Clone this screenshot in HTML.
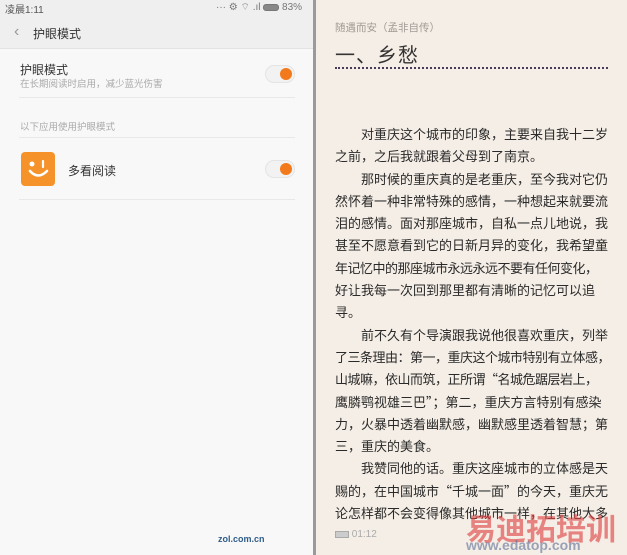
<!DOCTYPE html>
<html><head><meta charset="utf-8"><style>
*{margin:0;padding:0;box-sizing:border-box}
html,body{width:627px;height:555px;overflow:hidden}
body{background:#9a9a9a;font-family:"Liberation Sans","Noto Sans CJK SC",sans-serif;position:relative}
.l{position:absolute;left:0;top:0;width:313px;height:555px;background:#f8f8f8}
.r{position:absolute;left:316px;top:0;width:311px;height:555px;background:#f5eee6;overflow:hidden}
.t{position:absolute;white-space:nowrap}
.tog{position:absolute;width:30px;height:18px;border-radius:9px;background:#f2f2f2;border:1px solid #e4e4e4}
.tog:after{content:"";position:absolute;right:2px;top:2px;width:12px;height:12px;border-radius:50%;background:#f27a1c}
.hr{position:absolute;left:19px;width:276px;height:1px;background:#e8e8e8}
.p{position:absolute;left:19px;width:290px;font-family:"Noto Sans CJK SC",sans-serif;font-size:13px;line-height:22.3px;color:#2a2a2a;letter-spacing:0}
.p div{white-space:nowrap;height:22.3px}
.i{padding-left:26px}
.n{letter-spacing:-0.5px}
</style></head><body>
<div class="l">
 <div style="position:absolute;left:0;top:0;width:313px;height:49px;background:#efefef;border-bottom:1px solid #e2e2e2"></div>
 <div class="t" style="left:5px;top:1px;font-size:10px;color:#555">凌晨1:11</div>
 <div class="t" style="left:216px;top:1px;font-size:10px;color:#777">··· ⚙ ⌔ .ıl <span style="display:inline-block;width:16px;height:7px;border:1px solid #777;border-radius:3px;background:#888;vertical-align:middle"></span> 83%</div>
 <div class="t" style="left:14px;top:23px;font-size:16px;color:#999">&lsaquo;</div>
 <div class="t" style="left:33px;top:25px;font-size:12px;color:#333">护眼模式</div>
 <div class="t" style="left:20px;top:61px;font-size:12px;color:#333">护眼模式</div>
 <div class="t" style="left:20px;top:76px;font-size:9.5px;color:#aaa">在长期阅读时启用，减少蓝光伤害</div>
 <div class="tog" style="left:265px;top:65px"></div>
 <div class="hr" style="top:97px"></div>
 <div class="t" style="left:20px;top:119px;font-size:9.5px;color:#aaa">以下应用使用护眼模式</div>
 <div class="hr" style="top:137px"></div>
 <div style="position:absolute;left:21px;top:152px;width:34px;height:34px;border-radius:4px;background:#f6922a">
  <svg width="34" height="34" viewBox="0 0 34 34"><circle cx="11" cy="12" r="2.5" fill="#fff"/><path d="M22 9v6" stroke="#fff" stroke-width="2.2" stroke-linecap="round"/><path d="M9 19q8 9 17 0" stroke="#fff" stroke-width="2.6" fill="none" stroke-linecap="round"/></svg>
 </div>
 <div class="t" style="left:68px;top:162px;font-size:12px;color:#333">多看阅读</div>
 <div class="tog" style="left:265px;top:160px"></div>
 <div class="hr" style="top:199px"></div>
 <div class="t" style="left:218px;top:534px;font-size:9px;color:#2e5d8a;font-weight:bold">zol.com.cn</div>
</div>
<div class="r">
 <div class="t" style="left:19px;top:20px;font-size:10.5px;color:#a09a94">随遇而安（孟非自传）</div>
 <div class="t" style="left:19px;top:43px;font-size:20px;line-height:26px;color:#333;letter-spacing:1px">一、乡愁</div>
 <div style="position:absolute;left:19px;top:67px;width:273px;border-top:2px dotted #4a3a5a"></div>
 <div class="p" style="top:123px">
 <div class="i">对重庆这个城市的印象，主要来自我十二岁</div>
 <div>之前，之后我就跟着父母到了南京。</div>
 <div class="i">那时候的重庆真的是老重庆，至今我对它仍</div>
 <div>然怀着一种非常特殊的感情，一种想起来就要流</div>
 <div>泪的感情。面对那座城市，自私一点儿地说，我</div>
 <div>甚至不愿意看到它的日新月异的变化，我希望童</div>
 <div class="n">年记忆中的那座城市永远永远不要有任何变化，</div>
 <div>好让我每一次回到那里都有清晰的记忆可以追</div>
 <div>寻。</div>
 <div class="i">前不久有个导演跟我说他很喜欢重庆，列举</div>
 <div class="n">了三条理由：第一，重庆这个城市特别有立体感，</div>
 <div class="n">山城嘛，依山而筑，正所谓“名城危踞层岩上，</div>
 <div>鹰膦鹗视雄三巴”；第二，重庆方言特别有感染</div>
 <div>力，火暴中透着幽默感，幽默感里透着智慧；第</div>
 <div>三，重庆的美食。</div>
 <div class="i">我赞同他的话。重庆这座城市的立体感是天</div>
 <div>赐的，在中国城市“千城一面”的今天，重庆无</div>
 <div>论怎样都不会变得像其他城市一样，在其他大多</div>
 </div>
 <div class="t" style="left:19px;top:529px;font-size:10px;color:#aaa"><span style="display:inline-block;width:14px;height:7px;border:1px solid #aaa;background:#ccc;vertical-align:middle"></span> 01:12</div>
 <div class="t" style="left:150px;top:505px;font-size:30px;color:rgba(220,60,60,.6);font-weight:bold">易迪拓培训</div>
 <div class="t" style="left:150px;top:537px;font-size:14px;color:rgba(90,110,150,.6);font-weight:bold">www.edatop.com</div>
</div>
</body></html>
